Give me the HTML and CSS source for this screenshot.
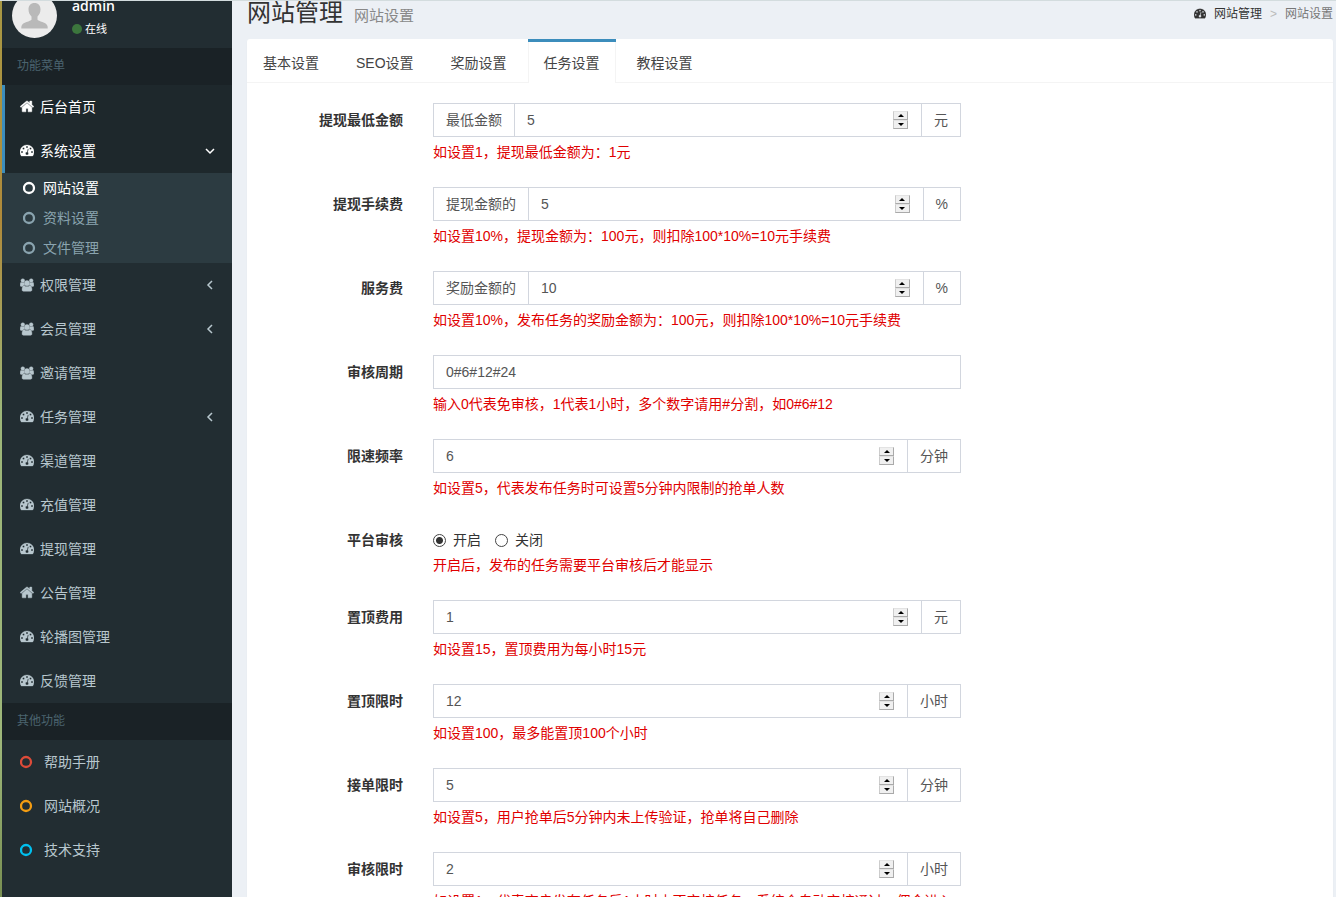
FILE: index.html
```html
<!DOCTYPE html>
<html lang="zh-CN">
<head>
    <meta charset="UTF-8">
    <meta name="viewport" content="width=device-width, initial-scale=1.0">
    <title>网站管理</title>
    <link rel="stylesheet" href="styles.css">
</head>
<body>
    <!-- Icon set -->
    <svg class="icon-defs" aria-hidden="true">
        <symbol id="i-home" viewBox="64 128 1664 1664">
            <path d="M1472 992v480q0 26-19 45t-45 19h-384v-384h-256v384h-384q-26 0-45-19t-19-45v-480q0-1 .5-3t.5-3l575-474 575 474q1 2 1 6zm223-69l-62 74q-8 9-21 11h-3q-13 0-21-7l-692-577-692 577q-12 8-24 7-13-2-21-11l-62-74q-8-10-7-23.5t11-21.5l719-599q32-26 76-26t76 26l244 204v-195q0-14 9-23t23-9h192q14 0 23 9t9 23v408l219 182q10 8 11 21.5t-7 23.5z" stroke="currentColor" stroke-width="50"/>
        </symbol>
        <symbol id="i-dash" viewBox="0 128 1792 1792">
            <path fill-rule="evenodd" stroke="currentColor" stroke-width="40" d="M384 1152q0-53-37.5-90.5t-90.5-37.5-90.5 37.5-37.5 90.5 37.5 90.5 90.5 37.5 90.5-37.5 37.5-90.5zm192-448q0-53-37.5-90.5t-90.5-37.5-90.5 37.5-37.5 90.5 37.5 90.5 90.5 37.5 90.5-37.5 37.5-90.5zm428 481l101-382q6-26-7.5-48.5t-38.5-29.5-48 6.5-30 39.5l-101 382q-60 5-107 43.5t-63 98.5q-20 77 20 146t117 89 146-20 89-117q16-60-6-117t-72-91zm660-33q0-53-37.5-90.5t-90.5-37.5-90.5 37.5-37.5 90.5 37.5 90.5 90.5 37.5 90.5-37.5 37.5-90.5zm-640-640q0-53-37.5-90.5t-90.5-37.5-90.5 37.5-37.5 90.5 37.5 90.5 90.5 37.5 90.5-37.5 37.5-90.5zm448 192q0-53-37.5-90.5t-90.5-37.5-90.5 37.5-37.5 90.5 37.5 90.5 90.5 37.5 90.5-37.5 37.5-90.5zm320 448q0 261-141 483-19 29-54 29h-1402q-35 0-54-29-141-221-141-483 0-182 71-348t191-286 286-191 348-71 348 71 286 191 191 286 71 348z"/>
        </symbol>
        <symbol id="i-users" viewBox="0 0 15 14">
            <g stroke="currentColor" stroke-width="0.4">
                <circle cx="3" cy="2.200" r="2"/>
                <circle cx="12" cy="2.200" r="2"/>
                <path d="M.2 7.500C.2 5.200.5 4 1.400 4c.8.8 2 .8 3 .3-.2 1.200.2 2.200.8 2.900C4 7.300 3.100 7.700 2.600 8.500H1.200C.4 8.500.2 8.100.2 7.500z"/>
                <path d="M14.800 7.500c0-2.300-.3-3.500-1.200-3.500-.8.8-2 .8-3 .3.2 1.200-.2 2.200-.8 2.900 1.200.1 2.100.5 2.600 1.300h1.400c.8 0 1-.4 1-1z"/>
                <circle cx="7.500" cy="5" r="2.800"/>
                <path d="M2.200 12c0-2.800.8-4.300 2.400-4.300 1.800 1.300 4 1.300 5.800 0 1.600 0 2.400 1.500 2.400 4.300 0 1.300-.8 1.800-2 1.800H4.200c-1.200 0-2-.5-2-1.800z"/>
            </g>
        </symbol>
        <symbol id="i-ring" viewBox="0 0 14 14">
            <circle cx="6" cy="7" r="5" fill="none" stroke="currentColor" stroke-width="2.300"/>
        </symbol>
        <symbol id="i-left" viewBox="0 0 10 10">
            <path d="M7 1L3 5l4 4" fill="none" stroke="currentColor" stroke-width="1.500"/>
        </symbol>
        <symbol id="i-down" viewBox="0 0 10 10">
            <path d="M1 3l4 4 4-4" fill="none" stroke="currentColor" stroke-width="1.500"/>
        </symbol>
    </svg>

    <div class="window">
        <div class="wrapper">
            <!-- Sidebar -->
            <aside class="sidebar">
                <div class="user-panel">
                    <svg class="avatar" viewBox="0 0 45 45" role="img" aria-label="admin">
                        <circle cx="22.500" cy="22.500" r="22.500" fill="#ececec"/>
                        <path d="M22.500 10c-3.800 0-6 2.600-6 6.300 0 3 1.200 5.700 3 7.200v3.200c-.6 1.600-9.200 2.300-10 6.300-.2 1-.2 1.800-.2 2.500h26.400c0-.7 0-1.500-.2-2.500-.8-4-9.400-4.700-10-6.300v-3.200c1.800-1.500 3-4.200 3-7.200 0-3.700-2.200-6.300-6-6.300z" fill="#b9b9b9"/>
                    </svg>
                    <div class="user-info">
                        <p class="user-name">admin</p>
                        <a href="#" class="user-status"><span class="status-dot"></span>在线</a>
                    </div>
                </div>

                <nav>
                    <div class="menu-header">功能菜单</div>
                    <ul class="menu">
                        <li><a href="#" class="menu-link active"><svg class="icon"><use href="#i-home"/></svg>后台首页</a></li>
                        <li>
                            <a href="#" class="menu-link active"><svg class="icon"><use href="#i-dash"/></svg>系统设置<svg class="arrow"><use href="#i-down"/></svg></a>
                            <ul class="submenu">
                                <li><a href="#" class="submenu-link current"><svg class="icon"><use href="#i-ring"/></svg>网站设置</a></li>
                                <li><a href="#" class="submenu-link"><svg class="icon"><use href="#i-ring"/></svg>资料设置</a></li>
                                <li><a href="#" class="submenu-link"><svg class="icon"><use href="#i-ring"/></svg>文件管理</a></li>
                            </ul>
                        </li>
                        <li><a href="#" class="menu-link"><svg class="icon"><use href="#i-users"/></svg>权限管理<svg class="arrow"><use href="#i-left"/></svg></a></li>
                        <li><a href="#" class="menu-link"><svg class="icon"><use href="#i-users"/></svg>会员管理<svg class="arrow"><use href="#i-left"/></svg></a></li>
                        <li><a href="#" class="menu-link"><svg class="icon"><use href="#i-users"/></svg>邀请管理</a></li>
                        <li><a href="#" class="menu-link"><svg class="icon"><use href="#i-dash"/></svg>任务管理<svg class="arrow"><use href="#i-left"/></svg></a></li>
                        <li><a href="#" class="menu-link"><svg class="icon"><use href="#i-dash"/></svg>渠道管理</a></li>
                        <li><a href="#" class="menu-link"><svg class="icon"><use href="#i-dash"/></svg>充值管理</a></li>
                        <li><a href="#" class="menu-link"><svg class="icon"><use href="#i-dash"/></svg>提现管理</a></li>
                        <li><a href="#" class="menu-link"><svg class="icon"><use href="#i-home"/></svg>公告管理</a></li>
                        <li><a href="#" class="menu-link"><svg class="icon"><use href="#i-dash"/></svg>轮播图管理</a></li>
                        <li><a href="#" class="menu-link"><svg class="icon"><use href="#i-dash"/></svg>反馈管理</a></li>
                    </ul>
                    <div class="menu-header">其他功能</div>
                    <ul class="menu menu-other">
                        <li><a href="#" class="menu-link"><svg class="icon text-red"><use href="#i-ring"/></svg>帮助手册</a></li>
                        <li><a href="#" class="menu-link"><svg class="icon text-yellow"><use href="#i-ring"/></svg>网站概况</a></li>
                        <li><a href="#" class="menu-link"><svg class="icon text-aqua"><use href="#i-ring"/></svg>技术支持</a></li>
                    </ul>
                </nav>
            </aside>

            <!-- Content -->
            <main class="content">
                <header class="content-header">
                    <h1>网站管理<small>网站设置</small></h1>
                    <nav class="breadcrumb">
                        <a href="#"><svg class="icon"><use href="#i-dash"/></svg>网站管理</a>
                        <span class="sep">&gt;</span>
                        <span class="here">网站设置</span>
                    </nav>
                </header>

                <div class="tabs-box">
                    <ul class="tabs">
                        <li><a href="#">基本设置</a></li>
                        <li><a href="#">SEO设置</a></li>
                        <li><a href="#">奖励设置</a></li>
                        <li class="active"><a href="#">任务设置</a></li>
                        <li><a href="#">教程设置</a></li>
                    </ul>

                    <form class="tab-content">
                        <div class="form-group">
                            <label class="form-label" for="min-amount">提现最低金额</label>
                            <div class="field">
                                <div class="input-group">
                                    <span class="addon">最低金额</span>
                                    <input type="number" id="min-amount" value="5">
                                    <span class="spinner"><button type="button" aria-label="增加"></button><button type="button" aria-label="减少"></button></span>
                                    <span class="addon">元</span>
                                </div>
                                <p class="help">如设置1，提现最低金额为：1元</p>
                            </div>
                        </div>
                        <div class="form-group">
                            <label class="form-label" for="fee">提现手续费</label>
                            <div class="field">
                                <div class="input-group">
                                    <span class="addon">提现金额的</span>
                                    <input type="number" id="fee" value="5">
                                    <span class="spinner"><button type="button" aria-label="增加"></button><button type="button" aria-label="减少"></button></span>
                                    <span class="addon">%</span>
                                </div>
                                <p class="help">如设置10%，提现金额为：100元，则扣除100*10%=10元手续费</p>
                            </div>
                        </div>
                        <div class="form-group">
                            <label class="form-label" for="service">服务费</label>
                            <div class="field">
                                <div class="input-group">
                                    <span class="addon">奖励金额的</span>
                                    <input type="number" id="service" value="10">
                                    <span class="spinner"><button type="button" aria-label="增加"></button><button type="button" aria-label="减少"></button></span>
                                    <span class="addon">%</span>
                                </div>
                                <p class="help">如设置10%，发布任务的奖励金额为：100元，则扣除100*10%=10元手续费</p>
                            </div>
                        </div>
                        <div class="form-group">
                            <label class="form-label" for="cycle">审核周期</label>
                            <div class="field">
                                <div class="input-group">
                                    <input type="text" id="cycle" value="0#6#12#24">
                                </div>
                                <p class="help">输入0代表免审核，1代表1小时，多个数字请用#分割，如0#6#12</p>
                            </div>
                        </div>
                        <div class="form-group">
                            <label class="form-label" for="rate">限速频率</label>
                            <div class="field">
                                <div class="input-group">
                                    <input type="number" id="rate" value="6">
                                    <span class="spinner"><button type="button" aria-label="增加"></button><button type="button" aria-label="减少"></button></span>
                                    <span class="addon">分钟</span>
                                </div>
                                <p class="help">如设置5，代表发布任务时可设置5分钟内限制的抢单人数</p>
                            </div>
                        </div>
                        <div class="form-group" role="radiogroup" aria-labelledby="audit-label">
                            <span class="form-label" id="audit-label">平台审核</span>
                            <div class="field">
                                <div class="radios">
                                    <label><input type="radio" name="audit" checked>开启</label>
                                    <label><input type="radio" name="audit">关闭</label>
                                </div>
                                <p class="help">开启后，发布的任务需要平台审核后才能显示</p>
                            </div>
                        </div>
                        <div class="form-group">
                            <label class="form-label" for="top-fee">置顶费用</label>
                            <div class="field">
                                <div class="input-group">
                                    <input type="number" id="top-fee" value="1">
                                    <span class="spinner"><button type="button" aria-label="增加"></button><button type="button" aria-label="减少"></button></span>
                                    <span class="addon">元</span>
                                </div>
                                <p class="help">如设置15，置顶费用为每小时15元</p>
                            </div>
                        </div>
                        <div class="form-group">
                            <label class="form-label" for="top-limit">置顶限时</label>
                            <div class="field">
                                <div class="input-group">
                                    <input type="number" id="top-limit" value="12">
                                    <span class="spinner"><button type="button" aria-label="增加"></button><button type="button" aria-label="减少"></button></span>
                                    <span class="addon">小时</span>
                                </div>
                                <p class="help">如设置100，最多能置顶100个小时</p>
                            </div>
                        </div>
                        <div class="form-group">
                            <label class="form-label" for="order-limit">接单限时</label>
                            <div class="field">
                                <div class="input-group">
                                    <input type="number" id="order-limit" value="5">
                                    <span class="spinner"><button type="button" aria-label="增加"></button><button type="button" aria-label="减少"></button></span>
                                    <span class="addon">分钟</span>
                                </div>
                                <p class="help">如设置5，用户抢单后5分钟内未上传验证，抢单将自己删除</p>
                            </div>
                        </div>
                        <div class="form-group">
                            <label class="form-label" for="audit-limit">审核限时</label>
                            <div class="field">
                                <div class="input-group">
                                    <input type="number" id="audit-limit" value="2">
                                    <span class="spinner"><button type="button" aria-label="增加"></button><button type="button" aria-label="减少"></button></span>
                                    <span class="addon">小时</span>
                                </div>
                                <p class="help">如设置1，代表商户发布任务后1小时内不审核任务，系统会自动审核通过，佣金进入</p>
                            </div>
                        </div>
                    </form>
                </div>
            </main>
        </div>
    </div>
</body>
</html>
```

FILE: styles.css
```css
/* ===== Global ===== */
* {
    box-sizing: border-box;
}

body {
    margin: 0;
    font-family: "Liberation Sans", "Noto Sans CJK SC", sans-serif;
    font-size: 14px;
    line-height: 20px;
    color: #333;
    background: #ecf0f5;
}

ul {
    list-style: none;
    margin: 0;
    padding: 0;
}

a {
    color: inherit;
    text-decoration: none;
}

p {
    margin: 0;
}

.icon-defs {
    display: none;
}

.icon {
    width: 14px;
    height: 14px;
    fill: currentColor;
    flex: none;
}

.window {
    height: 100vh;
    overflow: hidden;
    border-top: 1px solid #d3dcde;
}

/* page sits scrolled a little way down */
.wrapper {
    display: flex;
    margin-top: -18px;
    min-height: calc(100vh + 18px);
}

/* ===== Sidebar ===== */
.sidebar {
    width: 232px;
    flex: none;
    background: #222d32;
    border-left: 2px solid;
    border-image: linear-gradient(#a89a45, #b08a3a 25%, #9db679 45%, #9db679 80%, #6f8548) 1;
}

.user-panel {
    display: flex;
    gap: 15px;
    padding: 10px;
}

.avatar {
    width: 45px;
    height: 45px;
}

.user-info {
    display: flex;
    flex-direction: column;
    gap: 4px;
    padding-top: 3px;
    color: #fff;
}

.user-name {
    font-family: "Open Sans", sans-serif;
    font-weight: 600;
}

.user-status {
    display: flex;
    align-items: center;
    gap: 3px;
    font-size: 11px;
    line-height: 18px;
}

.status-dot {
    width: 10px;
    height: 10px;
    border-radius: 50%;
    background: #3c763d;
}

.menu-header {
    padding: 10px 15px;
    font-size: 12px;
    line-height: 17px;
    color: #4b646f;
    background: #1a2226;
}

.menu-link {
    display: flex;
    align-items: center;
    gap: 6px;
    padding: 12px 17px 12px 15px;
    border-left: 3px solid transparent;
    color: #b8c7ce;
}

.menu-link.active {
    color: #fff;
    background: #1e282c;
    border-left-color: #3c8dbc;
}

.menu-other .menu-link {
    gap: 10px;
}

.arrow {
    width: 10px;
    height: 10px;
    margin-left: auto;
}

.submenu {
    background: #2c3b41;
}

.submenu-link {
    display: flex;
    align-items: center;
    gap: 6px;
    padding: 5px 5px 5px 21px;
    color: #8aa4af;
}

.submenu-link.current {
    color: #fff;
}

.text-red {
    color: #dd4b39;
}

.text-yellow {
    color: #f39c12;
}

.text-aqua {
    color: #00c0ef;
}

/* ===== Content Header ===== */
.content {
    flex: 1;
    min-width: 0;
    padding: 15px 3px 0 15px;
}

.content-header {
    display: flex;
    justify-content: space-between;
    height: 41px;
}

h1 {
    margin: 0;
    font-size: 24px;
    font-weight: normal;
    line-height: 30px;
}

h1 small {
    margin-left: 11px;
    font-size: 15px;
    color: #888;
}

.breadcrumb {
    display: flex;
    align-items: center;
    gap: 8px;
    height: 32px;
    font-size: 12px;
}

.breadcrumb a {
    display: flex;
    align-items: center;
    gap: 8px;
}

.breadcrumb .icon {
    width: 12px;
    height: 12px;
}

.sep {
    color: #bbb;
}

.here {
    color: #777;
}

/* ===== Tabs ===== */
.tabs-box {
    background: #fff;
    border-radius: 3px;
    box-shadow: 0 1px 1px rgba(0, 0, 0, 0.1);
}

.tabs {
    display: flex;
    gap: 5px;
    border-bottom: 1px solid #f4f4f4;
}

.tabs li {
    border-top: 3px solid transparent;
    margin-bottom: -1px;
}

.tabs a {
    display: block;
    padding: 11px 15px 10px;
    border: 1px solid transparent;
    border-width: 0 1px;
    color: #444;
}

.tabs .active {
    border-top-color: #3c8dbc;
}

.tabs .active a {
    background: #fff;
    border-color: #f4f4f4;
}

/* ===== Form ===== */
.tab-content {
    padding: 20px 15px 0;
}

.form-group {
    display: grid;
    grid-template-columns: calc(16.6667% - 35px) 50%;
    column-gap: 30px;
    margin-bottom: 15px;
}

.form-label {
    padding-top: 7px;
    font-weight: bold;
    text-align: right;
    white-space: nowrap;
}

.input-group {
    display: flex;
    align-items: center;
    height: 34px;
    border: 1px solid #d2d6de;
    background: #fff;
    color: #555;
}

.input-group input {
    flex: 1;
    min-width: 0;
    height: 32px;
    padding: 6px 12px;
    border: 0;
    outline: none;
    background: transparent;
    font: inherit;
    color: inherit;
    appearance: textfield;
}

.input-group input::-webkit-inner-spin-button {
    appearance: none;
    margin: 0;
}

.addon {
    padding: 6px 12px;
}

.addon:first-child {
    border-right: 1px solid #d2d6de;
}

.addon:last-child {
    border-left: 1px solid #d2d6de;
}

/* Up / down buttons of the number boxes */
.spinner {
    display: flex;
    flex-direction: column;
    width: 15px;
    margin-right: 13px;
}

.spinner button {
    display: flex;
    align-items: center;
    justify-content: center;
    height: 9px;
    padding: 0;
    border: 1px solid #aaa;
    border-top-color: #e3e3e3;
    border-left-color: #ccc;
    background: #f0f0f0;
}

.spinner button::before {
    content: "";
    border: 3px solid transparent;
    border-top-width: 0;
    border-bottom-color: #000;
}

.spinner button:last-child::before {
    border-width: 3px 3px 0;
    border-top-color: #000;
}

.help {
    margin: 5px 0 10px;
    color: #e00000;
    white-space: nowrap;
}

.radios {
    display: flex;
    gap: 14px;
    padding-top: 7px;
}

.radios label {
    display: flex;
    align-items: center;
    gap: 7px;
}

.radios input {
    width: 13px;
    height: 13px;
    margin: 0;
    appearance: none;
    border: 1px solid #444;
    border-radius: 50%;
    background: #fff;
}

.radios input:checked {
    background: radial-gradient(circle, #333 3px, #fff 4px);
}
```
